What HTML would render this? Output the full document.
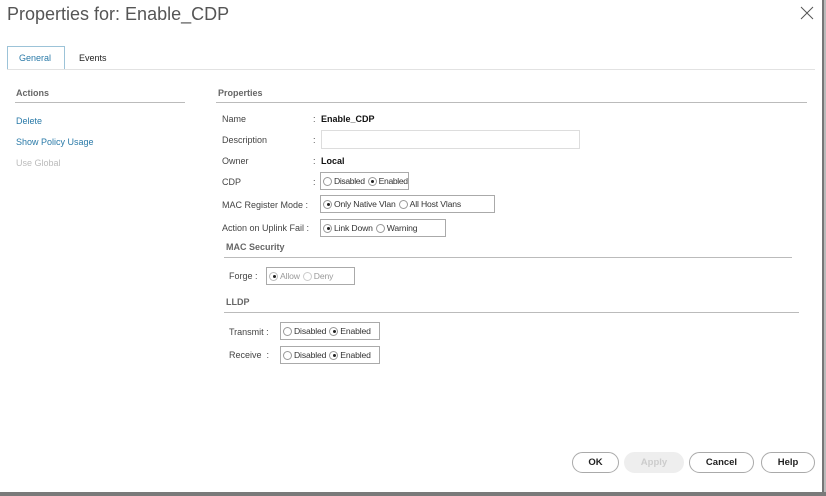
<html><head><style>
body{margin:0;width:826px;height:496px;background:#fff;position:relative;overflow:hidden;font-family:"Liberation Sans",sans-serif;font-size:9px;color:#444}
.a{position:absolute;white-space:nowrap}
.box{position:absolute;border:1px solid #aaa;display:flex;align-items:center;padding-left:2px;font-size:8.6px;color:#333;box-sizing:border-box;height:18px;white-space:nowrap;overflow:hidden;letter-spacing:-0.15px}
.r{display:inline-block;flex-shrink:0;width:9px;height:9px;border:1px solid #999;border-radius:50%;box-sizing:border-box;margin-right:2px;position:relative}
.r.on::after{content:"";position:absolute;left:2.5px;top:2.5px;width:3px;height:3px;border-radius:50%;background:#222}
.g{margin-left:3px}
.btn{position:absolute;top:452px;height:21px;border:1px solid #aaa;border-radius:11px;box-sizing:border-box;text-align:center;line-height:19px;font-weight:bold;font-size:9.5px;color:#222}
.hd{font-weight:bold;color:#666;font-size:9px}
.ln{position:absolute;height:1px;background:#bbb}
.lk{color:#2a7aa8}
</style></head><body>
<div class="a" style="left:7px;top:4px;font-size:18px;color:#555">Properties for: Enable_CDP</div>
<svg class="a" style="left:800px;top:6px" width="14" height="14"><path d="M1 1L13 13M13 1L1 13" stroke="#555" stroke-width="1"/></svg>
<div style="position:absolute;left:822px;top:0;width:2px;height:496px;background:#777"></div>
<div style="position:absolute;left:824px;top:0;width:2px;height:496px;background:#bbb"></div>
<div style="position:absolute;left:0;top:492px;width:826px;height:4px;background:#7a7a7a"></div>
<div style="position:absolute;left:7px;top:46px;width:58px;height:23px;border:1px solid #9cc3d8;border-bottom:none;background:#fff;box-sizing:border-box"></div>
<div class="ln" style="left:7px;top:69px;width:808px;background:#e2e2e2"></div>
<div class="a lk" style="left:19px;top:53px">General</div>
<div class="a" style="left:79px;top:53px;color:#222">Events</div>
<div class="a hd" style="left:16px;top:88px">Actions</div>
<div class="ln" style="left:15px;top:102px;width:170px"></div>
<div class="a lk" style="left:16px;top:116px">Delete</div>
<div class="a lk" style="left:16px;top:137px">Show Policy Usage</div>
<div class="a" style="left:16px;top:158px;color:#bbb">Use Global</div>
<div class="a hd" style="left:218px;top:88px">Properties</div>
<div class="ln" style="left:216px;top:102px;width:591px"></div>
<div class="a" style="left:222px;top:114px">Name</div><div class="a" style="left:313px;top:114px">:</div>
<div class="a" style="left:321px;top:114px;font-weight:bold;color:#111">Enable_CDP</div>
<div class="a" style="left:222px;top:135px">Description</div><div class="a" style="left:313px;top:135px">:</div>
<div style="position:absolute;left:321px;top:130px;width:259px;height:19px;border:1px solid #ddd;box-sizing:border-box"></div>
<div class="a" style="left:222px;top:156px">Owner</div><div class="a" style="left:313px;top:156px">:</div>
<div class="a" style="left:321px;top:156px;font-weight:bold;color:#111">Local</div>
<div class="a" style="left:222px;top:177px">CDP</div><div class="a" style="left:313px;top:177px">:</div>
<div class="box" style="left:320px;top:172px;width:89px;letter-spacing:-0.35px"><span class="r"></span>Disabled<span class="r on g"></span>Enabled</div>
<div class="a" style="left:222px;top:200px">MAC Register Mode :</div>
<div class="box" style="left:320px;top:195px;width:175px"><span class="r on"></span>Only Native Vlan<span class="r g"></span>All Host Vlans</div>
<div class="a" style="left:222px;top:223px">Action on Uplink Fail :</div>
<div class="box" style="left:320px;top:219px;width:126px"><span class="r on"></span>Link Down<span class="r g"></span>Warning</div>
<div class="a hd" style="left:226px;top:242px">MAC Security</div>
<div class="ln" style="left:224px;top:257px;width:568px"></div>
<div class="a" style="left:229px;top:271px">Forge :</div>
<div class="box" style="left:266px;top:267px;width:89px;color:#999"><span class="r on" style="border-color:#bbb"></span>Allow<span class="r g" style="border-color:#ccc"></span>Deny</div>
<div class="a hd" style="left:226px;top:297px">LLDP</div>
<div class="ln" style="left:224px;top:312px;width:575px"></div>
<div class="a" style="left:229px;top:327px">Transmit :</div>
<div class="box" style="left:280px;top:322px;width:100px"><span class="r"></span>Disabled<span class="r on g"></span>Enabled</div>
<div class="a" style="left:229px;top:350px">Receive &nbsp;:</div>
<div class="box" style="left:280px;top:346px;width:100px"><span class="r"></span>Disabled<span class="r on g"></span>Enabled</div>
<div class="btn" style="left:572px;width:47px">OK</div>
<div class="btn" style="left:624px;width:60px;background:#eee;border-color:#eee;color:#ccc">Apply</div>
<div class="btn" style="left:689px;width:65px">Cancel</div>
<div class="btn" style="left:761px;width:54px">Help</div>
</body></html>
